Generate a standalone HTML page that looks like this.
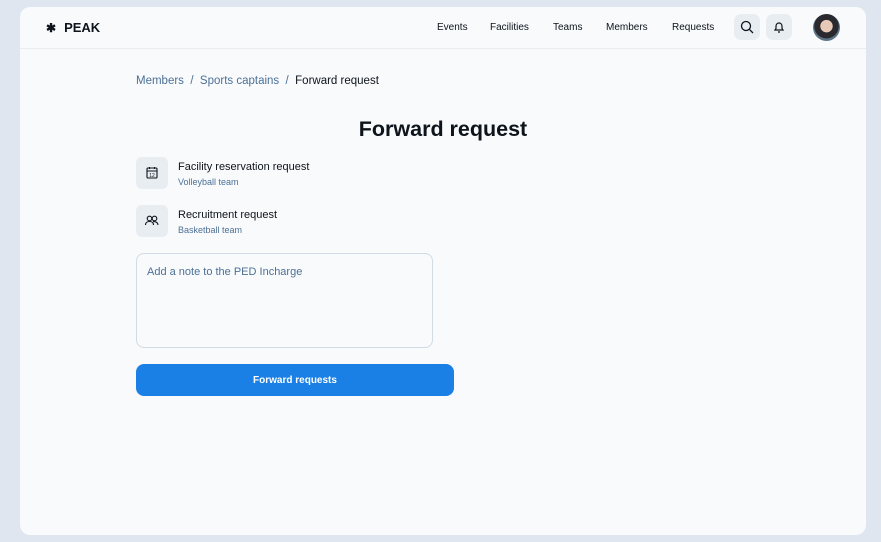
<!DOCTYPE html>
<html><head><style>
*{box-sizing:border-box;margin:0;padding:0}
body{width:881px;height:542px;background:#dfe6ef;font-family:"Liberation Sans",sans-serif;position:relative;overflow:hidden}
.card{position:absolute;left:20px;top:7px;width:846px;height:528px;background:#f8fafc;border-radius:10px}
.hdr{height:42px;border-bottom:1px solid #e9edf2;position:relative}
.logo{position:absolute;left:26px;top:13px;font-weight:700;font-size:13px;color:#0e141b}
.logo span{font-size:12px;margin-right:8px}
.nav{position:absolute;top:15px;font-size:10px;color:#0e141b}
.ib{position:absolute;top:7px;width:26px;height:26px;border-radius:7px;background:#e8edf2}
.av{position:absolute;left:793px;top:7px;width:27px;height:27px;border-radius:50%;background:radial-gradient(circle at 50% 45%,#e8c9b8 0 30%,#2a2a2e 32% 60%,#5d7486 62%)}
.bc{position:absolute;left:116px;top:68px;font-size:11.5px;color:#4d7096}
.bc b{font-weight:400;color:#0e141b}
h1{position:absolute;left:0;width:846px;text-align:center;top:110px;font-size:21.5px;font-weight:700;color:#0e141b}
.it{position:absolute;left:116px;width:300px;height:32px}
.ic{position:absolute;left:0;top:0;width:32px;height:32px;border-radius:6px;background:#e8edf2}
.t1{position:absolute;left:42px;top:4px;font-size:11px;color:#0e141b}
.t2{position:absolute;left:42px;top:20px;font-size:9px;color:#4d7096}
.ta{position:absolute;left:116px;top:246px;width:297px;height:95px;border:1px solid #d1dbe5;border-radius:8px;background:#f8fafc;padding:12px 10px;font-size:11px;color:#4d7096}
.btn{position:absolute;left:116px;top:357px;width:318px;height:32px;border-radius:8px;background:#1a80e5;color:#fff;font-size:10px;font-weight:700;text-align:center;line-height:34px}
</style></head><body>
<div class="card">
<div class="hdr">
<div class="logo"><span>✱</span>PEAK</div>
<div class="nav" style="left:417px">Events</div>
<div class="nav" style="left:470px">Facilities</div>
<div class="nav" style="left:533px">Teams</div>
<div class="nav" style="left:586px">Members</div>
<div class="nav" style="left:652px">Requests</div>
<div class="ib" style="left:714px"><svg width="26" height="26" viewBox="0 0 26 26" fill="none" stroke="#0e141b" stroke-width="1.3"><circle cx="12" cy="12" r="4.5"/><path d="M15.3 15.3L19 19"/></svg></div>
<div class="ib" style="left:746px"><svg width="26" height="26" viewBox="0 0 26 26" fill="none" stroke="#0e141b" stroke-width="1.2"><path d="M9 16h8l-1-1.5V12a3 3 0 0 0-6 0v2.5L9 16zM12 18h2"/></svg></div>
<div class="av"></div>
</div>
<div class="bc">Members &nbsp;/&nbsp; Sports captains &nbsp;/&nbsp; <b>Forward request</b></div>
<h1>Forward request</h1>
<div class="it" style="top:150px"><div class="ic"><svg width="32" height="32" viewBox="0 0 32 32" fill="none" stroke="#0e141b" stroke-width="1.1"><rect x="11" y="11" width="10" height="10" rx="1"/><path d="M11 14h10M13.5 10v2M18.5 10v2"/><text x="16" y="20" font-size="5" text-anchor="middle" fill="#0e141b" stroke="none" font-family="Liberation Sans">12</text></svg></div><div class="t1">Facility reservation request</div><div class="t2">Volleyball team</div></div>
<div class="it" style="top:198px"><div class="ic"><svg width="32" height="32" viewBox="0 0 32 32" fill="none" stroke="#0e141b" stroke-width="1.1"><circle cx="13.5" cy="13.5" r="2.3"/><circle cx="18.5" cy="13.5" r="2.3"/><path d="M9.5 20c0-2.5 2-3.5 4-3.5s4 1 4 3.5M17 16.6c2 0 5 .6 5 3.4"/></svg></div><div class="t1">Recruitment request</div><div class="t2">Basketball team</div></div>
<div class="ta">Add a note to the PED Incharge</div>
<div class="btn">Forward requests</div>
</div>
</body></html>
